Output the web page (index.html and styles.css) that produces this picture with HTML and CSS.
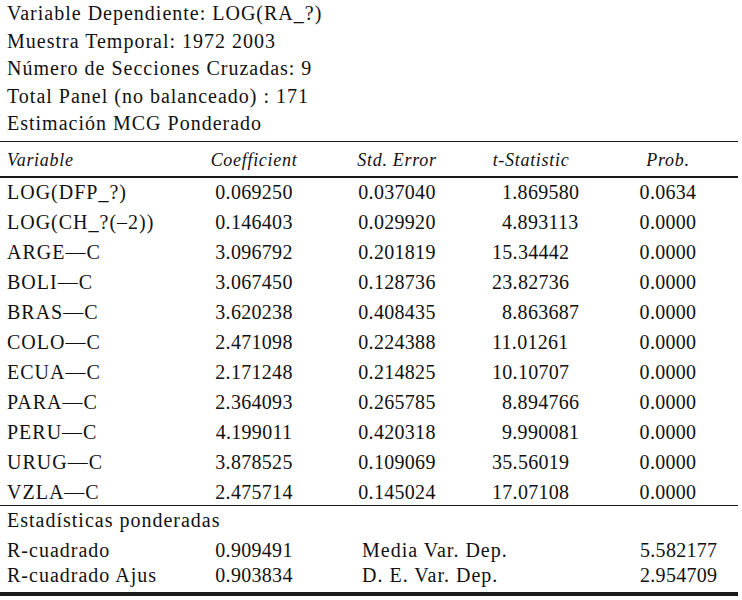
FILE: index.html
```html
<!DOCTYPE html>
<html lang="es">
<head>
<meta charset="utf-8">
<title>Estimación MCG Ponderado</title>
<link rel="stylesheet" href="styles.css">
</head>
<body>
<div class="page">
  <div class="meta">
    <p>Variable Dependiente: LOG(RA_?)</p>
    <p>Muestra Temporal: 1972 2003</p>
    <p>Número de Secciones Cruzadas: 9</p>
    <p>Total Panel (no balanceado) : 171</p>
    <p>Estimación MCG Ponderado</p>
  </div>
  <table class="reg">
    <colgroup><col class="w1"><col class="w2"><col class="w3"><col class="w4"><col class="w5"></colgroup>
    <thead>
      <tr><th class="var">Variable</th><th class="coef">Coefficient</th><th class="se">Std. Error</th><th class="tsh">t-Statistic</th><th class="pr">Prob.</th></tr>
    </thead>
    <tbody class="coefs">
      <tr><td class="var">LOG(DFP_?)</td><td class="coef">0.069250</td><td class="se">0.037040</td><td class="ts"><span class="fig"></span>1.869580</td><td class="pr">0.0634</td></tr>
      <tr><td class="var">LOG(CH_?(–2))</td><td class="coef">0.146403</td><td class="se">0.029920</td><td class="ts"><span class="fig"></span>4.893113</td><td class="pr">0.0000</td></tr>
      <tr><td class="var">ARGE—C</td><td class="coef">3.096792</td><td class="se">0.201819</td><td class="ts">15.34442</td><td class="pr">0.0000</td></tr>
      <tr><td class="var">BOLI—C</td><td class="coef">3.067450</td><td class="se">0.128736</td><td class="ts">23.82736</td><td class="pr">0.0000</td></tr>
      <tr><td class="var">BRAS—C</td><td class="coef">3.620238</td><td class="se">0.408435</td><td class="ts"><span class="fig"></span>8.863687</td><td class="pr">0.0000</td></tr>
      <tr><td class="var">COLO—C</td><td class="coef">2.471098</td><td class="se">0.224388</td><td class="ts">11.01261</td><td class="pr">0.0000</td></tr>
      <tr><td class="var">ECUA—C</td><td class="coef">2.171248</td><td class="se">0.214825</td><td class="ts">10.10707</td><td class="pr">0.0000</td></tr>
      <tr><td class="var">PARA—C</td><td class="coef">2.364093</td><td class="se">0.265785</td><td class="ts"><span class="fig"></span>8.894766</td><td class="pr">0.0000</td></tr>
      <tr><td class="var">PERU—C</td><td class="coef">4.199011</td><td class="se">0.420318</td><td class="ts"><span class="fig"></span>9.990081</td><td class="pr">0.0000</td></tr>
      <tr><td class="var">URUG—C</td><td class="coef">3.878525</td><td class="se">0.109069</td><td class="ts">35.56019</td><td class="pr">0.0000</td></tr>
      <tr class="last"><td class="var">VZLA—C</td><td class="coef">2.475714</td><td class="se">0.145024</td><td class="ts">17.07108</td><td class="pr">0.0000</td></tr>
    </tbody>
    <tbody class="stats">
      <tr class="sect"><td class="var" colspan="5">Estadísticas ponderadas</td></tr>
      <tr class="mid"><td class="var">R-cuadrado</td><td class="coef">0.909491</td><td class="lab" colspan="2">Media Var. Dep.</td><td class="val">5.582177</td></tr>
      <tr class="end"><td class="var">R-cuadrado Ajus</td><td class="coef">0.903834</td><td class="lab" colspan="2">D. E. Var. Dep.</td><td class="val">2.954709</td></tr>
    </tbody>
  </table>
</div>
</body>
</html>
```
FILE: styles.css
```css
* { box-sizing: border-box; }

body {
  margin: 0;
  background: #ffffff;
  color: #111111;
  font-family: "Liberation Serif", "Times New Roman", serif;
  font-size: 20px;
  letter-spacing: 1px;
}

.page {
  width: 742px;
}

.meta {
  margin-bottom: 3.5px;
}

.meta p {
  margin: 0;
  padding-left: 7px;
  line-height: 27.5px;
}

.reg {
  width: 738px;
  border-collapse: separate;
  border-spacing: 0;
  table-layout: fixed;
}

.w1 { width: 190px; }
.w2 { width: 128px; }
.w3 { width: 158px; }
.w4 { width: 110px; }
.w5 { width: 152px; }

.reg th {
  font-style: italic;
  font-weight: normal;
  font-size: 18px;
  letter-spacing: 0.7px;
  line-height: 24px;
  padding: 6px 0 4px;
  text-align: center;
  border-top: 1px solid #1a1a1a;
  border-bottom: 2px solid #1a1a1a;
}

.reg td {
  padding: 2px 0 4px;
  line-height: 24px;
  white-space: nowrap;
}

.reg .var { text-align: left; padding-left: 7px; }
.reg .coef { text-align: center; }
.reg .se { text-align: center; }
.reg .tsh { text-align: center; }
.reg .ts { text-align: left; padding-left: 16px; }
.reg .pr { text-align: center; padding-left: 12px; }

.reg td.coef,
.reg td.se,
.reg td.ts,
.reg td.pr,
.reg td.val { letter-spacing: 0.3px; }

.fig {
  display: inline-block;
  width: 10px;
}

.coefs tr.last td {
  padding-bottom: 1px;
}

.stats tr.sect td {
  line-height: 20px;
  padding-top: 4px;
  padding-bottom: 3px;
  border-top: 1px solid #1a1a1a;
}
.stats tr.mid td {
  line-height: 25px;
  padding-top: 5px;
  padding-bottom: 0;
}
.stats tr.end td {
  line-height: 24px;
  padding-top: 0;
  padding-bottom: 5px;
  border-bottom: 4px solid #1a1a1a;
}

.reg .lab { text-align: left; padding-left: 44px; }
.reg .val { text-align: left; padding-left: 54px; }
```
